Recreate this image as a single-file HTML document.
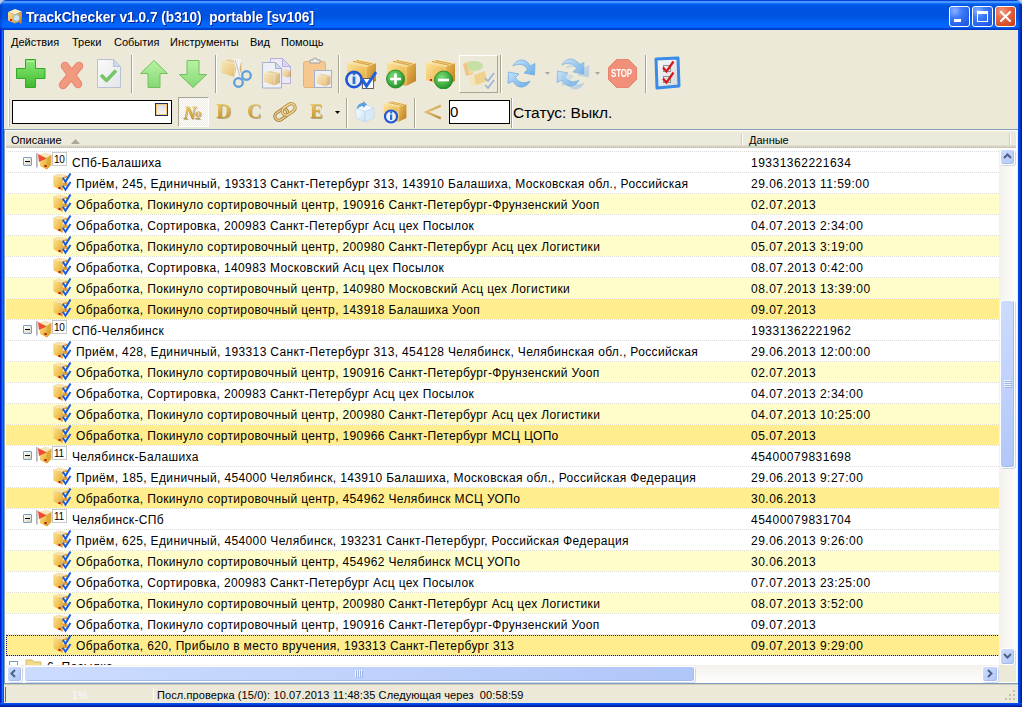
<!DOCTYPE html><html><head><meta charset="utf-8"><style>html,body{margin:0;padding:0;width:1022px;height:707px;overflow:hidden;background:#ECE9D8;position:relative}*{box-sizing:border-box}</style></head><body>
<div style="position:absolute;left:0px;top:0px;width:1022px;height:707px;background:#C8D0E4"></div>
<div style="position:absolute;left:0px;top:6px;width:1022px;height:701px;background:#0842DC"></div>
<div style="position:absolute;left:0px;top:0px;width:1022px;height:30px;border-radius:6px 6px 0 0;background:linear-gradient(180deg,#0A40D4 0px,#0A40D4 1px,#4498FF 1px,#4498FF 3px,#1A78FF 3px,#0862F2 4px,#0058E8 5px,#0054E2 9px,#0053E0 16px,#005CEE 20px,#0066FB 23px,#0068FF 27px,#0052E4 28px,#003CC6 29px,#003CC6 30px)"></div>
<div style="position:absolute;left:1017px;top:4px;width:5px;height:26px;background:linear-gradient(90deg,rgba(0,30,160,0) 0,rgba(0,40,170,0.35) 2px,rgba(0,20,140,0.8) 5px)"></div>
<div style="position:absolute;left:0px;top:4px;width:3px;height:26px;background:linear-gradient(90deg,rgba(0,40,180,0.5) 0,rgba(0,40,180,0) 3px)"></div>
<div style="position:absolute;left:0px;top:0px;width:3px;height:1px;background:#BFCADF"></div>
<div style="position:absolute;left:0px;top:1px;width:1px;height:2px;background:#BFCADF"></div>
<div style="position:absolute;left:1019px;top:0px;width:3px;height:1px;background:#BFCADF"></div>
<div style="position:absolute;left:1021px;top:1px;width:1px;height:2px;background:#BFCADF"></div>
<div style="position:absolute;left:0px;top:30px;width:4px;height:677px;background:linear-gradient(90deg,#0019CF 0,#0019CF 1px,#0043E4 1px,#0043E4 2px,#166EFF 2px,#166EFF 3px,#0552E4 3px,#0552E4 4px)"></div>
<div style="position:absolute;left:1018px;top:30px;width:4px;height:677px;background:linear-gradient(90deg,#0550EC 0,#0550EC 1px,#0040DC 1px,#0040DC 2px,#0030C0 2px,#0030C0 3px,#001A98 3px,#001A98 4px)"></div>
<div style="position:absolute;left:0px;top:703px;width:1022px;height:4px;background:linear-gradient(180deg,#0550EC 0,#0550EC 1px,#0040DC 1px,#0040DC 2px,#0030C0 2px,#0030C0 3px,#001A98 3px,#001A98 4px)"></div>
<div style="position:absolute;left:4px;top:30px;width:1014px;height:673px;background:#ECE9D8"></div>
<div style="position:absolute;left:26px;top:10px;line-height:14.4px;font-size:14.4px;font-family:'Liberation Sans',sans-serif;color:#fff;font-weight:bold;white-space:pre;text-shadow:1px 1px 0 #0A1E8C;transform:scaleX(0.95);transform-origin:0 0">TrackChecker v1.0.7 (b310)  portable [sv106]</div>
<svg style="position:absolute;left:7px;top:8px" width="16" height="16" viewBox="0 0 16 16"><polygon points="1,4 8,1 15,3.5 8,6.5" fill="#FFF0C0"/><polygon points="1,4 8,6.5 8,15.5 1,12.5" fill="url(#gL)"/><polygon points="8,6.5 15,3.5 15,12.5 8,15.5" fill="url(#gR)"/><rect x="3" y="11" width="2" height="2" fill="#D02020"/><circle cx="9.5" cy="10" r="3.4" fill="#CFE4EE" stroke="#98B8C8" stroke-width="1"/><path d="M12 12.5 L14.5 15" stroke="#F07838" stroke-width="2"/></svg>
<div style="position:absolute;left:949px;top:6px;width:21px;height:21px;border:1px solid #fff;border-radius:3px;background:radial-gradient(circle at 25% 20%,#8DB2FF 0,#3D7BF7 35%,#2763EE 70%,#1A4FD8 100%)"></div>
<div style="position:absolute;left:972px;top:6px;width:21px;height:21px;border:1px solid #fff;border-radius:3px;background:radial-gradient(circle at 25% 20%,#8DB2FF 0,#3D7BF7 35%,#2763EE 70%,#1A4FD8 100%)"></div>
<div style="position:absolute;left:995px;top:6px;width:21px;height:21px;border:1px solid #fff;border-radius:3px;background:radial-gradient(circle at 30% 25%,#F2A08A 0,#E86A48 35%,#D84F28 70%,#C23E1A 100%)"></div>
<div style="position:absolute;left:954px;top:19px;width:7px;height:3px;background:#fff"></div>
<div style="position:absolute;left:977px;top:11px;width:11px;height:11px;border:1px solid #fff;border-top:3px solid #fff"></div>
<svg style="position:absolute;left:1000px;top:11px" width="11" height="11" viewBox="0 0 11 11"><path d="M1 1 L10 10 M10 1 L1 10" stroke="#fff" stroke-width="2" stroke-linecap="square"/></svg>
<div style="position:absolute;left:11px;top:37px;line-height:11px;font-size:11px;font-family:'Liberation Sans',sans-serif;color:#000;font-weight:normal;white-space:pre;">Действия</div>
<div style="position:absolute;left:72px;top:37px;line-height:11px;font-size:11px;font-family:'Liberation Sans',sans-serif;color:#000;font-weight:normal;white-space:pre;">Треки</div>
<div style="position:absolute;left:114px;top:37px;line-height:11px;font-size:11px;font-family:'Liberation Sans',sans-serif;color:#000;font-weight:normal;white-space:pre;">События</div>
<div style="position:absolute;left:170px;top:37px;line-height:11px;font-size:11px;font-family:'Liberation Sans',sans-serif;color:#000;font-weight:normal;white-space:pre;">Инструменты</div>
<div style="position:absolute;left:250px;top:37px;line-height:11px;font-size:11px;font-family:'Liberation Sans',sans-serif;color:#000;font-weight:normal;white-space:pre;">Вид</div>
<div style="position:absolute;left:281px;top:37px;line-height:11px;font-size:11px;font-family:'Liberation Sans',sans-serif;color:#000;font-weight:normal;white-space:pre;">Помощь</div>
<div style="position:absolute;left:8px;top:56px;width:1px;height:36px;background:#fff"></div>
<div style="position:absolute;left:9px;top:56px;width:1px;height:36px;background:#C1BDAC"></div>
<div style="position:absolute;left:8px;top:98px;width:1px;height:29px;background:#fff"></div>
<div style="position:absolute;left:9px;top:98px;width:1px;height:29px;background:#C1BDAC"></div>
<div style="position:absolute;left:131px;top:55px;width:1px;height:38px;background:#A6A392"></div>
<div style="position:absolute;left:132px;top:55px;width:1px;height:38px;background:#fff"></div>
<div style="position:absolute;left:215px;top:55px;width:1px;height:38px;background:#A6A392"></div>
<div style="position:absolute;left:216px;top:55px;width:1px;height:38px;background:#fff"></div>
<div style="position:absolute;left:338px;top:55px;width:1px;height:38px;background:#A6A392"></div>
<div style="position:absolute;left:339px;top:55px;width:1px;height:38px;background:#fff"></div>
<div style="position:absolute;left:500px;top:55px;width:1px;height:38px;background:#A6A392"></div>
<div style="position:absolute;left:501px;top:55px;width:1px;height:38px;background:#fff"></div>
<div style="position:absolute;left:645px;top:55px;width:1px;height:38px;background:#A6A392"></div>
<div style="position:absolute;left:646px;top:55px;width:1px;height:38px;background:#fff"></div>
<div style="position:absolute;left:346px;top:98px;width:1px;height:30px;background:#A6A392"></div>
<div style="position:absolute;left:347px;top:98px;width:1px;height:30px;background:#fff"></div>
<div style="position:absolute;left:414px;top:98px;width:1px;height:30px;background:#A6A392"></div>
<div style="position:absolute;left:415px;top:98px;width:1px;height:30px;background:#fff"></div>
<div style="position:absolute;left:511px;top:98px;width:1px;height:30px;background:#A6A392"></div>
<div style="position:absolute;left:512px;top:98px;width:1px;height:30px;background:#fff"></div>
<svg width="0" height="0" style="position:absolute"><defs>
<linearGradient id="gL" x1="0" y1="0" x2="1" y2="1"><stop offset="0" stop-color="#FBE49C"/><stop offset="0.7" stop-color="#EDBA52"/><stop offset="1" stop-color="#D89C30"/></linearGradient>
<linearGradient id="gR" x1="0" y1="0" x2="1" y2="1"><stop offset="0" stop-color="#F0C058"/><stop offset="1" stop-color="#B87A20"/></linearGradient>
<linearGradient id="gT" x1="0" y1="0" x2="0" y2="1"><stop offset="0" stop-color="#FFF4CF"/><stop offset="1" stop-color="#F5D685"/></linearGradient>
<linearGradient id="grn" x1="0" y1="0" x2="0" y2="1"><stop offset="0" stop-color="#8DEB78"/><stop offset="1" stop-color="#3FB82E"/></linearGradient>
<linearGradient id="lgrn" x1="0" y1="0" x2="0" y2="1"><stop offset="0" stop-color="#B8F2A4"/><stop offset="1" stop-color="#86D874"/></linearGradient>
<radialGradient id="gcirc" cx="0.4" cy="0.35" r="0.7"><stop offset="0" stop-color="#7DE07A"/><stop offset="1" stop-color="#1E8E22"/></radialGradient>
<radialGradient id="bcirc" cx="0.4" cy="0.35" r="0.7"><stop offset="0" stop-color="#6FA8F0"/><stop offset="1" stop-color="#1548B8"/></radialGradient>
<linearGradient id="gold" x1="0" y1="0" x2="0" y2="1"><stop offset="0" stop-color="#F4DC8C"/><stop offset="0.5" stop-color="#D0A040"/><stop offset="1" stop-color="#A8782A"/></linearGradient>
</defs></svg>
<svg style="position:absolute;left:16px;top:59px" width="30" height="30" viewBox="0 0 30 30"><path d="M9.5 0.5h10v9h9.5v10h-9.5v9h-10v-9h-9v-10h9z" fill="url(#grn)" stroke="#33A824" stroke-width="1"/><path d="M11 2.5h7" stroke="#D8FFC8" stroke-width="1" opacity="0.7"/></svg>
<svg style="position:absolute;left:54px;top:58px" width="32" height="32" viewBox="0 0 32 32"><g stroke="#E8836A" stroke-width="8.5" stroke-linecap="round" stroke-linejoin="round"><path d="M11 8 L24 26"/><path d="M25 8 L9 27"/></g><g stroke="#F29A80" stroke-width="6.5" stroke-linecap="round"><path d="M11 8 L24 26"/><path d="M25 8 L9 27"/></g></svg>
<svg style="position:absolute;left:96px;top:58px" width="26" height="31" viewBox="0 0 26 31"><defs><linearGradient id="docg" x1="0" y1="0" x2="1" y2="1"><stop offset="0" stop-color="#FAFAF8"/><stop offset="1" stop-color="#E4E6E8"/></linearGradient></defs><path d="M1.5 1.5h16l7 7v21h-23z" fill="url(#docg)" stroke="#B9C2D2" stroke-width="1"/><path d="M17.5 1.5v7h7z" fill="#C8DCF0" stroke="#B9C2D2"/><path d="M5 17 L10.5 22.5 L20 12.5" stroke="#78C468" stroke-width="3.5" fill="none" stroke-linejoin="round"/></svg>
<svg style="position:absolute;left:140px;top:60px" width="28" height="28" viewBox="0 0 28 28"><path d="M14 0.5 L27.5 13.5 H20 V27.5 H8 V13.5 H0.5Z" fill="url(#lgrn)" stroke="#70C05C" stroke-width="1"/></svg>
<svg style="position:absolute;left:179px;top:60px" width="28" height="28" viewBox="0 0 28 28"><path d="M14 27.5 L27.5 14.5 H20 V0.5 H8 V14.5 H0.5Z" fill="url(#lgrn)" stroke="#70C05C" stroke-width="1"/></svg>
<svg style="position:absolute;left:221px;top:57px" width="33" height="32" viewBox="0 0 33 32"><g opacity="0.6"><polygon points="0.68,4.40 13.60,7.12 13.60,20.04 0.68,15.96" fill="url(#gL)"/><polygon points="13.60,7.12 20.40,4.40 20.40,16.64 13.60,20.04" fill="url(#gR)"/><polygon points="0.68,4.40 9.52,1.68 20.40,4.40 13.60,7.12" fill="url(#gT)"/><line x1="4.76" y1="3.24" x2="16.32" y2="5.90" stroke="#D9A850" stroke-width="0.88"/><line x1="7.14" y1="2.56" x2="18.36" y2="5.22" stroke="#D9A850" stroke-width="0.88"/><line x1="13.60" y1="7.12" x2="13.60" y2="20.04" stroke="#F8D890" stroke-width="0.54"/></g><path d="M14 2 L19 19 M19 2 L15 20" stroke="#F4F4F4" stroke-width="3.2"/><path d="M14 3 L19 19" stroke="#B0B0B0" stroke-width="0.8"/><circle cx="17.5" cy="25.5" r="4.3" fill="none" stroke="#5C9EDC" stroke-width="2.2"/><circle cx="25.5" cy="18.5" r="4.3" fill="none" stroke="#5C9EDC" stroke-width="2.2"/></svg>
<svg style="position:absolute;left:261px;top:57px" width="31" height="32" viewBox="0 0 31 32"><path d="M9.5 1.5h12l8 8v17h-20z" fill="#ECE8F6" stroke="#B8B0DC"/><path d="M21.5 1.5v8h8z" fill="#DCD4F4" stroke="#B8B0DC"/><path d="M1.5 5.5h13l6 6v19.5h-19z" fill="#EEF0F6" stroke="#A8B0C8"/><path d="M14.5 5.5v6h6z" fill="#C8E0F0" stroke="#A8B0C8"/><g opacity="0.6"><polygon points="3.05,15.75 13.50,17.95 13.50,28.40 3.05,25.10" fill="url(#gL)"/><polygon points="13.50,17.95 19.00,15.75 19.00,25.65 13.50,28.40" fill="url(#gR)"/><polygon points="3.05,15.75 10.20,13.55 19.00,15.75 13.50,17.95" fill="url(#gT)"/><line x1="6.35" y1="14.81" x2="15.70" y2="16.96" stroke="#D9A850" stroke-width="0.72"/><line x1="8.28" y1="14.27" x2="17.35" y2="16.41" stroke="#D9A850" stroke-width="0.72"/><line x1="13.50" y1="17.95" x2="13.50" y2="28.40" stroke="#F8D890" stroke-width="0.44"/><polygon points="21.30,13.50 27.00,14.70 27.00,20.40 21.30,18.60" fill="url(#gL)"/><polygon points="27.00,14.70 30.00,13.50 30.00,18.90 27.00,20.40" fill="url(#gR)"/><polygon points="21.30,13.50 25.20,12.30 30.00,13.50 27.00,14.70" fill="url(#gT)"/><line x1="23.10" y1="12.99" x2="28.20" y2="14.16" stroke="#D9A850" stroke-width="0.39"/><line x1="24.15" y1="12.69" x2="29.10" y2="13.86" stroke="#D9A850" stroke-width="0.39"/><line x1="27.00" y1="14.70" x2="27.00" y2="20.40" stroke="#F8D890" stroke-width="0.24"/></g></svg>
<svg style="position:absolute;left:302px;top:57px" width="31" height="32" viewBox="0 0 31 32"><rect x="1.5" y="4.5" width="22" height="26" rx="2" fill="#F6C890" stroke="#E4B078"/><path d="M8 6 v-3 h3 a2 2 0 0 1 4 0 h3 v3z" fill="#EDEDED" stroke="#A0A0A0"/><rect x="12.5" y="13.5" width="17" height="17" fill="#EEF0F6" stroke="#A8B0C8"/><g opacity="0.6"><polygon points="14.48,18.40 23.60,20.32 23.60,29.44 14.48,26.56" fill="url(#gL)"/><polygon points="23.60,20.32 28.40,18.40 28.40,27.04 23.60,29.44" fill="url(#gR)"/><polygon points="14.48,18.40 20.72,16.48 28.40,18.40 23.60,20.32" fill="url(#gT)"/><line x1="17.36" y1="17.58" x2="25.52" y2="19.46" stroke="#D9A850" stroke-width="0.62"/><line x1="19.04" y1="17.10" x2="26.96" y2="18.98" stroke="#D9A850" stroke-width="0.62"/><line x1="23.60" y1="20.32" x2="23.60" y2="29.44" stroke="#F8D890" stroke-width="0.38"/></g></svg>
<svg style="position:absolute;left:345px;top:57px" width="32" height="32" viewBox="0 0 32 32"><polygon points="2.00,6.00 21.00,10.00 21.00,29.00 2.00,23.00" fill="url(#gL)"/><polygon points="21.00,10.00 31.00,6.00 31.00,24.00 21.00,29.00" fill="url(#gR)"/><polygon points="2.00,6.00 15.00,2.00 31.00,6.00 21.00,10.00" fill="url(#gT)"/><line x1="8.00" y1="4.30" x2="25.00" y2="8.20" stroke="#D9A850" stroke-width="1.30"/><line x1="11.50" y1="3.30" x2="28.00" y2="7.20" stroke="#D9A850" stroke-width="1.30"/><line x1="21.00" y1="10.00" x2="21.00" y2="29.00" stroke="#F8D890" stroke-width="0.80"/><circle cx="9" cy="22.5" r="7.6" fill="#E8ECF4" stroke="#1F56D4" stroke-width="2.6"/><rect x="7.6" y="19.5" width="2.8" height="7.5" fill="#2A74C8"/><circle cx="9" cy="16.8" r="1.5" fill="#2A74C8"/><rect x="17.5" y="21.5" width="11" height="10" fill="#fff" stroke="#606060"/><path d="M17 22 L21.5 29 L31 15" stroke="#2060E0" stroke-width="3" fill="none"/></svg>
<svg style="position:absolute;left:385px;top:57px" width="31" height="32" viewBox="0 0 31 32"><polygon points="2.00,6.00 21.00,10.00 21.00,29.00 2.00,23.00" fill="url(#gL)"/><polygon points="21.00,10.00 31.00,6.00 31.00,24.00 21.00,29.00" fill="url(#gR)"/><polygon points="2.00,6.00 15.00,2.00 31.00,6.00 21.00,10.00" fill="url(#gT)"/><line x1="8.00" y1="4.30" x2="25.00" y2="8.20" stroke="#D9A850" stroke-width="1.30"/><line x1="11.50" y1="3.30" x2="28.00" y2="7.20" stroke="#D9A850" stroke-width="1.30"/><line x1="21.00" y1="10.00" x2="21.00" y2="29.00" stroke="#F8D890" stroke-width="0.80"/><circle cx="10.5" cy="22" r="9" fill="url(#gcirc)" stroke="#188018" stroke-width="0.8"/><path d="M10.5 16.5v11M5 22h11" stroke="#fff" stroke-width="2.6"/></svg>
<svg style="position:absolute;left:424px;top:57px" width="31" height="32" viewBox="0 0 31 32"><polygon points="2.00,6.00 21.00,10.00 21.00,29.00 2.00,23.00" fill="url(#gL)"/><polygon points="21.00,10.00 31.00,6.00 31.00,24.00 21.00,29.00" fill="url(#gR)"/><polygon points="2.00,6.00 15.00,2.00 31.00,6.00 21.00,10.00" fill="url(#gT)"/><line x1="8.00" y1="4.30" x2="25.00" y2="8.20" stroke="#D9A850" stroke-width="1.30"/><line x1="11.50" y1="3.30" x2="28.00" y2="7.20" stroke="#D9A850" stroke-width="1.30"/><line x1="21.00" y1="10.00" x2="21.00" y2="29.00" stroke="#F8D890" stroke-width="0.80"/><rect x="6" y="22" width="2" height="2" fill="#C02020"/><circle cx="19.5" cy="23" r="9" fill="url(#gcirc)" stroke="#188018" stroke-width="0.8"/><path d="M14 23h11" stroke="#fff" stroke-width="2.6"/></svg>
<div style="position:absolute;left:459px;top:55px;width:39px;height:38px;border:1px solid;border-color:#fff #A8A490 #A8A490 #fff"></div>
<svg style="position:absolute;left:459px;top:55px" width="39" height="38" viewBox="0 0 39 38"><g opacity="0.55"><path d="M4 9 L11 6 L14 19 L7 21Z" fill="#F0A848"/><path d="M8 8 L13 6 L15 17 L10 19Z" fill="#F8D088" /><ellipse cx="16" cy="11" rx="8" ry="5" fill="#A8D878"/><path d="M10 22 L20 19 L22 29 L12 31Z" fill="#F8E0A8"/><path d="M15 20 L26 16 L28 26 L17 30Z" fill="#F0C050"/><path d="M26 23 l3 3 l6 -8 M26 30 l3 3 l6 -8" stroke="#5A84D8" stroke-width="1.6" fill="none"/></g></svg>
<svg style="position:absolute;left:504px;top:55px" width="36" height="36" viewBox="0 0 36 36"><defs><linearGradient id="rfg" x1="0" y1="0" x2="1" y2="1"><stop offset="0" stop-color="#C4E2FA"/><stop offset="1" stop-color="#6AACE8"/></linearGradient></defs><g fill="url(#rfg)" stroke="#6AA6E0" stroke-width="0.7"><path d="M9 11 C12 4 22 2 26 11 L31 8.5 L30.5 20 L20 18 L23.5 14.5 C21 9 14 8 9 11Z"/><path d="M26 26 C23 33 13 35 9 26 L4 28.5 L4.5 17 L15 19 L11.5 22.5 C14 28 21 29 26 26Z"/></g></svg>
<svg style="position:absolute;left:552px;top:54px" width="40" height="38" viewBox="0 0 40 38"><g opacity="0.45" fill="url(#rfg)" stroke="#80B0E0" stroke-width="0.7" transform="translate(6,3)"><path d="M9 11 C12 4 22 2 26 11 L31 8.5 L30.5 20 L20 18 L23.5 14.5 C21 9 14 8 9 11Z"/><path d="M26 26 C23 33 13 35 9 26 L4 28.5 L4.5 17 L15 19 L11.5 22.5 C14 28 21 29 26 26Z"/></g><g opacity="0.85" fill="url(#rfg)" stroke="#6AA6E0" stroke-width="0.7" transform="translate(1,0)"><path d="M9 11 C12 4 22 2 26 11 L31 8.5 L30.5 20 L20 18 L23.5 14.5 C21 9 14 8 9 11Z"/><path d="M26 26 C23 33 13 35 9 26 L4 28.5 L4.5 17 L15 19 L11.5 22.5 C14 28 21 29 26 26Z"/></g></svg>
<svg style="position:absolute;left:545px;top:72px" width="6" height="4" viewBox="0 0 6 4"><path d="M0 0h5l-2.5 3z" fill="#A8A8A0"/></svg>
<svg style="position:absolute;left:595px;top:72px" width="6" height="4" viewBox="0 0 6 4"><path d="M0 0h5l-2.5 3z" fill="#A8A8A0"/></svg>
<svg style="position:absolute;left:608px;top:59px" width="29" height="29" viewBox="0 0 29 29"><path d="M8.5 0.5h12l8 8v12l-8 8h-12l-8-8v-12z" fill="#F0907A" stroke="#E8846C"/></svg>
<div style="position:absolute;left:611px;top:68px;line-height:11.5px;font-size:11.5px;font-family:'Liberation Sans',sans-serif;color:#fff;font-weight:bold;white-space:pre;letter-spacing:-0.2px;transform:scaleX(0.69);transform-origin:0 0">STOP</div>
<svg style="position:absolute;left:654px;top:56px" width="27" height="34" viewBox="0 0 27 34"><defs><linearGradient id="clg" x1="0" y1="0" x2="1" y2="1"><stop offset="0" stop-color="#FAFAFA"/><stop offset="1" stop-color="#D4D8DC"/></linearGradient></defs><path d="M2 3 L24 2 L25 30 L3 32Z" fill="url(#clg)" stroke="#3A8AE8" stroke-width="3" stroke-linejoin="round"/><rect x="9.5" y="9.5" width="7" height="6" fill="none" stroke="#909090"/><rect x="9.5" y="20.5" width="7" height="6" fill="none" stroke="#909090"/><path d="M9 11.5 l3.5 4 l7 -10 M9 22.5 l3.5 4 l7 -10" stroke="#D81818" stroke-width="2.2" fill="none"/></svg>
<div style="position:absolute;left:12px;top:100px;width:160px;height:24px;border:1px solid #000;background:#fff"></div>
<div style="position:absolute;left:155px;top:103px;width:13px;height:13px;border:1px solid #1C2C6C;box-shadow:inset 0 0 0 1px #F8C878;background:linear-gradient(180deg,#D8DCE0,#F8F8F8)"></div>
<div style="position:absolute;left:178px;top:97px;width:31px;height:30px;border:1px solid;border-color:#A8A490 #fff #fff #A8A490;background-color:#F8F7F2;background-image:repeating-conic-gradient(#FFFFFF 0 25%,#EDEAE0 0 50%);background-size:2px 2px"></div>
<div style="position:absolute;left:183px;top:103px;line-height:19px;font-size:19px;font-family:'Liberation Serif',serif;color:#D4A840;font-weight:bold;white-space:pre;background:linear-gradient(180deg,#F0D478 0%,#D8AC40 55%,#B88A28 100%);-webkit-background-clip:text;background-clip:text;-webkit-text-fill-color:transparent;filter:drop-shadow(1px 1px 0 rgba(120,90,40,0.45));transform:scaleX(1.08);transform-origin:0 0;font-style:italic">№</div>
<div style="position:absolute;left:216px;top:101px;line-height:20px;font-size:20px;font-family:'Liberation Serif',serif;color:#D4A840;font-weight:bold;white-space:pre;background:linear-gradient(180deg,#F0D478 0%,#D8AC40 55%,#B88A28 100%);-webkit-background-clip:text;background-clip:text;-webkit-text-fill-color:transparent;filter:drop-shadow(1px 1px 0 rgba(120,90,40,0.45));transform:scaleX(1.05);transform-origin:0 0;font-style:normal">D</div>
<div style="position:absolute;left:247px;top:101px;line-height:20px;font-size:20px;font-family:'Liberation Serif',serif;color:#D4A840;font-weight:bold;white-space:pre;background:linear-gradient(180deg,#F0D478 0%,#D8AC40 55%,#B88A28 100%);-webkit-background-clip:text;background-clip:text;-webkit-text-fill-color:transparent;filter:drop-shadow(1px 1px 0 rgba(120,90,40,0.45));transform:scaleX(1.0);transform-origin:0 0;font-style:normal">C</div>
<div style="position:absolute;left:310px;top:101px;line-height:20px;font-size:20px;font-family:'Liberation Serif',serif;color:#D4A840;font-weight:bold;white-space:pre;background:linear-gradient(180deg,#F0D478 0%,#D8AC40 55%,#B88A28 100%);-webkit-background-clip:text;background-clip:text;-webkit-text-fill-color:transparent;filter:drop-shadow(1px 1px 0 rgba(120,90,40,0.45));transform:scaleX(0.95);transform-origin:0 0;font-style:normal">E</div>
<svg style="position:absolute;left:272px;top:101px" width="27" height="21" viewBox="0 0 27 21"><g transform="rotate(-35 13 11)"><rect x="1.5" y="7" width="14" height="8" rx="4" fill="none" stroke="#A88040" stroke-width="3.2"/><rect x="1.5" y="7" width="14" height="8" rx="4" fill="none" stroke="#E8CC88" stroke-width="1.4"/><rect x="10.5" y="7" width="14" height="8" rx="4" fill="none" stroke="#B89048" stroke-width="3.2"/><rect x="10.5" y="7" width="14" height="8" rx="4" fill="none" stroke="#F0D898" stroke-width="1.4"/></g></svg>
<svg style="position:absolute;left:335px;top:111px" width="6" height="4" viewBox="0 0 6 4"><path d="M0 0h5l-2.5 3z" fill="#000"/></svg>
<svg style="position:absolute;left:354px;top:100px" width="22" height="23" viewBox="0 0 22 23"><defs><linearGradient id="bbx" x1="0" y1="0" x2="1" y2="1"><stop offset="0" stop-color="#FFFFFF"/><stop offset="1" stop-color="#C8E0F6"/></linearGradient></defs><polygon points="2,8 11,4.5 20,8 11,11.5" fill="#F4FAFF" stroke="#B8D4EE" stroke-width="0.6"/><polygon points="2,8 11,11.5 11,22 2,18" fill="url(#bbx)" stroke="#B8D4EE" stroke-width="0.6"/><polygon points="11,11.5 20,8 20,18 11,22" fill="#D8EAFA" stroke="#B8D4EE" stroke-width="0.6"/><path d="M3 9 C3 5 6 3 9 3 L9 1 L13 4.5 L9 8 L9 6 C7 6 5 7 3 9Z" fill="#5AA0E0"/></svg>
<svg style="position:absolute;left:383px;top:100px" width="25" height="24" viewBox="0 0 25 24"><polygon points="0.78,3.90 15.60,7.02 15.60,21.84 0.78,17.16" fill="url(#gL)"/><polygon points="15.60,7.02 23.40,3.90 23.40,17.94 15.60,21.84" fill="url(#gR)"/><polygon points="0.78,3.90 10.92,0.78 23.40,3.90 15.60,7.02" fill="url(#gT)"/><line x1="5.46" y1="2.57" x2="18.72" y2="5.62" stroke="#D9A850" stroke-width="1.01"/><line x1="8.19" y1="1.79" x2="21.06" y2="4.84" stroke="#D9A850" stroke-width="1.01"/><line x1="15.60" y1="7.02" x2="15.60" y2="21.84" stroke="#F8D890" stroke-width="0.62"/><circle cx="8" cy="16.5" r="6" fill="#EEF2F8" stroke="#1F56D4" stroke-width="2.2"/><rect x="7" y="14.5" width="2.2" height="5.5" fill="#2A74C8"/><circle cx="8.1" cy="12.4" r="1.2" fill="#2A74C8"/></svg>
<svg style="position:absolute;left:423px;top:104px" width="19" height="16" viewBox="0 0 19 16"><defs><linearGradient id="ltg" x1="0" y1="0" x2="1" y2="1"><stop offset="0" stop-color="#F0D890"/><stop offset="1" stop-color="#B88A30"/></linearGradient></defs><path d="M0.5 8 L17.5 0.5 L18 3 L6 8 L18 13 L17.5 15.5Z" fill="url(#ltg)"/></svg>
<div style="position:absolute;left:449px;top:100px;width:61px;height:24px;border:1px solid #000;background:#fff"></div>
<div style="position:absolute;left:450px;top:104px;line-height:15px;font-size:15px;font-family:'Liberation Sans',sans-serif;color:#000;font-weight:normal;white-space:pre;">0</div>
<div style="position:absolute;left:513px;top:105px;line-height:15.5px;font-size:15.5px;font-family:'Liberation Sans',sans-serif;color:#000;font-weight:normal;white-space:pre;">Статус: Выкл.</div>
<div style="position:absolute;left:4px;top:129px;width:1014px;height:1px;background:#7F9DB9"></div>
<div style="position:absolute;left:4px;top:129px;width:1px;height:555px;background:#7F9DB9"></div>
<div style="position:absolute;left:5px;top:130px;width:1012px;height:553px;background:#fff"></div>
<div style="position:absolute;left:4px;top:683px;width:1014px;height:1px;background:#7F9DB9"></div>
<div style="position:absolute;left:4px;top:684px;width:1014px;height:1px;background:#CFCBBB"></div>
<div style="position:absolute;left:6px;top:131px;width:1010px;height:17px;background:linear-gradient(180deg,#F1EEE2 0,#EBEADB 2px,#EBEADB 14px,#E2DECD 14px,#E2DECD 15px,#D6D2C2 15px,#D6D2C2 16px,#CBC7B8 16px,#CBC7B8 17px)"></div>
<div style="position:absolute;left:11px;top:135px;line-height:11px;font-size:11px;font-family:'Liberation Sans',sans-serif;color:#000;font-weight:normal;white-space:pre;">Описание</div>
<svg style="position:absolute;left:71px;top:138px" width="10" height="6" viewBox="0 0 10 6"><path d="M0 6h9l-4.5-5z" fill="#ACA899"/></svg>
<div style="position:absolute;left:741px;top:134px;width:1px;height:11px;background:#D0CDB9"></div>
<div style="position:absolute;left:742px;top:134px;width:1px;height:11px;background:#fff"></div>
<div style="position:absolute;left:1009px;top:134px;width:1px;height:11px;background:#D0CDB9"></div>
<div style="position:absolute;left:1010px;top:134px;width:1px;height:11px;background:#fff"></div>
<div style="position:absolute;left:749px;top:135px;line-height:11px;font-size:11px;font-family:'Liberation Sans',sans-serif;color:#000;font-weight:normal;white-space:pre;">Данные</div>
<div style="position:absolute;left:6px;top:149px;width:993px;height:516px;overflow:hidden">
<div style="position:absolute;left:17px;top:8px;width:9px;height:9px;border:1px solid #7B9EBD;border-radius:1px;background:linear-gradient(135deg,#fff,#D6D2C4)"></div>
<div style="position:absolute;left:19px;top:12px;width:5px;height:1px;background:#000"></div>
<svg style="position:absolute;left:28px;top:2px" width="20" height="20" viewBox="0 0 20 20"><rect x="2" y="2" width="1.7" height="14.5" fill="#B4B4BC"/><polygon points="5.5,4 13,6.5 13,18.5 6,15" fill="url(#rbl)"/><polygon points="13,6.5 17.5,3.5 17.5,14 13,18.5" fill="#E0A838"/><polygon points="5.5,4 11,1.5 17.5,3.5 13,6.5" fill="#F8E6BC"/><polygon points="4,3 12.5,7.5 5,11" fill="#F04A32"/><rect x="10.5" y="14" width="2" height="2" fill="#B01010"/></svg>
<div style="position:absolute;left:46px;top:3px;width:15px;height:14px;border:1px solid #C8C8C8;background:#fff"></div>
<div style="position:absolute;left:48px;top:6px;line-height:10px;font-size:10px;font-family:'Liberation Sans',sans-serif;color:#000;font-weight:normal;white-space:pre;letter-spacing:-0.2px;">10</div>
<div style="position:absolute;left:66px;top:8px;line-height:12px;font-size:12px;font-family:'Liberation Sans',sans-serif;color:#000;font-weight:normal;white-space:pre;letter-spacing:0.36px;">СПб-Балашиха</div>
<div style="position:absolute;left:745px;top:8px;line-height:12px;font-size:12px;font-family:'Liberation Sans',sans-serif;color:#000;font-weight:normal;white-space:pre;letter-spacing:0.5px;">19331362221634</div>
<svg style="position:absolute;left:44px;top:23px" width="22" height="21" viewBox="0 0 22 21"><defs><linearGradient id="rbl" x1="0" y1="0" x2="1" y2="1"><stop offset="0" stop-color="#FCE49A"/><stop offset="0.6" stop-color="#F0C050"/><stop offset="1" stop-color="#D89A28"/></linearGradient></defs><polygon points="3,3.5 12.5,5.5 12.5,18.7 3.5,14.5" fill="url(#rbl)"/><polygon points="3,3.5 9,1.5 17.5,3.5 12.5,5.5" fill="#F6E2B0"/><polygon points="12.5,5.5 17.5,3.5 17.5,16 12.5,18.7" fill="#DCA040"/><rect x="13" y="6" width="5" height="4.5" fill="#fff"/><rect x="13" y="14" width="5" height="4.5" fill="#fff"/><rect x="8.5" y="15" width="2" height="2" fill="#C01010"/><polyline points="12.8,5.8 15.5,9.8 20.5,1.5" stroke="#1A5CDC" stroke-width="2" fill="none"/><polyline points="12.8,13.8 15.5,17.8 20.5,10" stroke="#1A5CDC" stroke-width="2" fill="none"/></svg>
<div style="position:absolute;left:70px;top:29px;line-height:12px;font-size:12px;font-family:'Liberation Sans',sans-serif;color:#000;font-weight:normal;white-space:pre;letter-spacing:0.36px;">Приём, 245, Единичный, 193313 Санкт-Петербург 313, 143910 Балашиха, Московская обл., Российская</div>
<div style="position:absolute;left:745px;top:29px;line-height:12px;font-size:12px;font-family:'Liberation Sans',sans-serif;color:#000;font-weight:normal;white-space:pre;letter-spacing:0.5px;">29.06.2013 11:59:00</div>
<div style="position:absolute;left:0px;top:45px;width:993px;height:20px;background:#FFFDCA"></div>
<svg style="position:absolute;left:44px;top:44px" width="22" height="21" viewBox="0 0 22 21"><defs><linearGradient id="rbl" x1="0" y1="0" x2="1" y2="1"><stop offset="0" stop-color="#FCE49A"/><stop offset="0.6" stop-color="#F0C050"/><stop offset="1" stop-color="#D89A28"/></linearGradient></defs><polygon points="3,3.5 12.5,5.5 12.5,18.7 3.5,14.5" fill="url(#rbl)"/><polygon points="3,3.5 9,1.5 17.5,3.5 12.5,5.5" fill="#F6E2B0"/><polygon points="12.5,5.5 17.5,3.5 17.5,16 12.5,18.7" fill="#DCA040"/><rect x="13" y="6" width="5" height="4.5" fill="#fff"/><rect x="13" y="14" width="5" height="4.5" fill="#fff"/><rect x="8.5" y="15" width="2" height="2" fill="#C01010"/><polyline points="12.8,5.8 15.5,9.8 20.5,1.5" stroke="#1A5CDC" stroke-width="2" fill="none"/><polyline points="12.8,13.8 15.5,17.8 20.5,10" stroke="#1A5CDC" stroke-width="2" fill="none"/></svg>
<div style="position:absolute;left:70px;top:50px;line-height:12px;font-size:12px;font-family:'Liberation Sans',sans-serif;color:#000;font-weight:normal;white-space:pre;letter-spacing:0.36px;">Обработка, Покинуло сортировочный центр, 190916 Санкт-Петербург-Фрунзенский Уооп</div>
<div style="position:absolute;left:745px;top:50px;line-height:12px;font-size:12px;font-family:'Liberation Sans',sans-serif;color:#000;font-weight:normal;white-space:pre;letter-spacing:0.5px;">02.07.2013</div>
<svg style="position:absolute;left:44px;top:65px" width="22" height="21" viewBox="0 0 22 21"><defs><linearGradient id="rbl" x1="0" y1="0" x2="1" y2="1"><stop offset="0" stop-color="#FCE49A"/><stop offset="0.6" stop-color="#F0C050"/><stop offset="1" stop-color="#D89A28"/></linearGradient></defs><polygon points="3,3.5 12.5,5.5 12.5,18.7 3.5,14.5" fill="url(#rbl)"/><polygon points="3,3.5 9,1.5 17.5,3.5 12.5,5.5" fill="#F6E2B0"/><polygon points="12.5,5.5 17.5,3.5 17.5,16 12.5,18.7" fill="#DCA040"/><rect x="13" y="6" width="5" height="4.5" fill="#fff"/><rect x="13" y="14" width="5" height="4.5" fill="#fff"/><rect x="8.5" y="15" width="2" height="2" fill="#C01010"/><polyline points="12.8,5.8 15.5,9.8 20.5,1.5" stroke="#1A5CDC" stroke-width="2" fill="none"/><polyline points="12.8,13.8 15.5,17.8 20.5,10" stroke="#1A5CDC" stroke-width="2" fill="none"/></svg>
<div style="position:absolute;left:70px;top:71px;line-height:12px;font-size:12px;font-family:'Liberation Sans',sans-serif;color:#000;font-weight:normal;white-space:pre;letter-spacing:0.36px;">Обработка, Сортировка, 200983 Санкт-Петербург Асц цех Посылок</div>
<div style="position:absolute;left:745px;top:71px;line-height:12px;font-size:12px;font-family:'Liberation Sans',sans-serif;color:#000;font-weight:normal;white-space:pre;letter-spacing:0.5px;">04.07.2013 2:34:00</div>
<div style="position:absolute;left:0px;top:87px;width:993px;height:20px;background:#FFFDCA"></div>
<svg style="position:absolute;left:44px;top:86px" width="22" height="21" viewBox="0 0 22 21"><defs><linearGradient id="rbl" x1="0" y1="0" x2="1" y2="1"><stop offset="0" stop-color="#FCE49A"/><stop offset="0.6" stop-color="#F0C050"/><stop offset="1" stop-color="#D89A28"/></linearGradient></defs><polygon points="3,3.5 12.5,5.5 12.5,18.7 3.5,14.5" fill="url(#rbl)"/><polygon points="3,3.5 9,1.5 17.5,3.5 12.5,5.5" fill="#F6E2B0"/><polygon points="12.5,5.5 17.5,3.5 17.5,16 12.5,18.7" fill="#DCA040"/><rect x="13" y="6" width="5" height="4.5" fill="#fff"/><rect x="13" y="14" width="5" height="4.5" fill="#fff"/><rect x="8.5" y="15" width="2" height="2" fill="#C01010"/><polyline points="12.8,5.8 15.5,9.8 20.5,1.5" stroke="#1A5CDC" stroke-width="2" fill="none"/><polyline points="12.8,13.8 15.5,17.8 20.5,10" stroke="#1A5CDC" stroke-width="2" fill="none"/></svg>
<div style="position:absolute;left:70px;top:92px;line-height:12px;font-size:12px;font-family:'Liberation Sans',sans-serif;color:#000;font-weight:normal;white-space:pre;letter-spacing:0.36px;">Обработка, Покинуло сортировочный центр, 200980 Санкт-Петербург Асц цех Логистики</div>
<div style="position:absolute;left:745px;top:92px;line-height:12px;font-size:12px;font-family:'Liberation Sans',sans-serif;color:#000;font-weight:normal;white-space:pre;letter-spacing:0.5px;">05.07.2013 3:19:00</div>
<svg style="position:absolute;left:44px;top:107px" width="22" height="21" viewBox="0 0 22 21"><defs><linearGradient id="rbl" x1="0" y1="0" x2="1" y2="1"><stop offset="0" stop-color="#FCE49A"/><stop offset="0.6" stop-color="#F0C050"/><stop offset="1" stop-color="#D89A28"/></linearGradient></defs><polygon points="3,3.5 12.5,5.5 12.5,18.7 3.5,14.5" fill="url(#rbl)"/><polygon points="3,3.5 9,1.5 17.5,3.5 12.5,5.5" fill="#F6E2B0"/><polygon points="12.5,5.5 17.5,3.5 17.5,16 12.5,18.7" fill="#DCA040"/><rect x="13" y="6" width="5" height="4.5" fill="#fff"/><rect x="13" y="14" width="5" height="4.5" fill="#fff"/><rect x="8.5" y="15" width="2" height="2" fill="#C01010"/><polyline points="12.8,5.8 15.5,9.8 20.5,1.5" stroke="#1A5CDC" stroke-width="2" fill="none"/><polyline points="12.8,13.8 15.5,17.8 20.5,10" stroke="#1A5CDC" stroke-width="2" fill="none"/></svg>
<div style="position:absolute;left:70px;top:113px;line-height:12px;font-size:12px;font-family:'Liberation Sans',sans-serif;color:#000;font-weight:normal;white-space:pre;letter-spacing:0.36px;">Обработка, Сортировка, 140983 Московский Асц цех Посылок</div>
<div style="position:absolute;left:745px;top:113px;line-height:12px;font-size:12px;font-family:'Liberation Sans',sans-serif;color:#000;font-weight:normal;white-space:pre;letter-spacing:0.5px;">08.07.2013 0:42:00</div>
<div style="position:absolute;left:0px;top:129px;width:993px;height:20px;background:#FFFDCA"></div>
<svg style="position:absolute;left:44px;top:128px" width="22" height="21" viewBox="0 0 22 21"><defs><linearGradient id="rbl" x1="0" y1="0" x2="1" y2="1"><stop offset="0" stop-color="#FCE49A"/><stop offset="0.6" stop-color="#F0C050"/><stop offset="1" stop-color="#D89A28"/></linearGradient></defs><polygon points="3,3.5 12.5,5.5 12.5,18.7 3.5,14.5" fill="url(#rbl)"/><polygon points="3,3.5 9,1.5 17.5,3.5 12.5,5.5" fill="#F6E2B0"/><polygon points="12.5,5.5 17.5,3.5 17.5,16 12.5,18.7" fill="#DCA040"/><rect x="13" y="6" width="5" height="4.5" fill="#fff"/><rect x="13" y="14" width="5" height="4.5" fill="#fff"/><rect x="8.5" y="15" width="2" height="2" fill="#C01010"/><polyline points="12.8,5.8 15.5,9.8 20.5,1.5" stroke="#1A5CDC" stroke-width="2" fill="none"/><polyline points="12.8,13.8 15.5,17.8 20.5,10" stroke="#1A5CDC" stroke-width="2" fill="none"/></svg>
<div style="position:absolute;left:70px;top:134px;line-height:12px;font-size:12px;font-family:'Liberation Sans',sans-serif;color:#000;font-weight:normal;white-space:pre;letter-spacing:0.36px;">Обработка, Покинуло сортировочный центр, 140980 Московский Асц цех Логистики</div>
<div style="position:absolute;left:745px;top:134px;line-height:12px;font-size:12px;font-family:'Liberation Sans',sans-serif;color:#000;font-weight:normal;white-space:pre;letter-spacing:0.5px;">08.07.2013 13:39:00</div>
<div style="position:absolute;left:0px;top:150px;width:993px;height:20px;background:#FFED8E"></div>
<svg style="position:absolute;left:44px;top:149px" width="22" height="21" viewBox="0 0 22 21"><defs><linearGradient id="rbl" x1="0" y1="0" x2="1" y2="1"><stop offset="0" stop-color="#FCE49A"/><stop offset="0.6" stop-color="#F0C050"/><stop offset="1" stop-color="#D89A28"/></linearGradient></defs><polygon points="3,3.5 12.5,5.5 12.5,18.7 3.5,14.5" fill="url(#rbl)"/><polygon points="3,3.5 9,1.5 17.5,3.5 12.5,5.5" fill="#F6E2B0"/><polygon points="12.5,5.5 17.5,3.5 17.5,16 12.5,18.7" fill="#DCA040"/><rect x="13" y="6" width="5" height="4.5" fill="#fff"/><rect x="13" y="14" width="5" height="4.5" fill="#fff"/><rect x="8.5" y="15" width="2" height="2" fill="#C01010"/><polyline points="12.8,5.8 15.5,9.8 20.5,1.5" stroke="#1A5CDC" stroke-width="2" fill="none"/><polyline points="12.8,13.8 15.5,17.8 20.5,10" stroke="#1A5CDC" stroke-width="2" fill="none"/></svg>
<div style="position:absolute;left:70px;top:155px;line-height:12px;font-size:12px;font-family:'Liberation Sans',sans-serif;color:#000;font-weight:normal;white-space:pre;letter-spacing:0.36px;">Обработка, Покинуло сортировочный центр, 143918 Балашиха Уооп</div>
<div style="position:absolute;left:745px;top:155px;line-height:12px;font-size:12px;font-family:'Liberation Sans',sans-serif;color:#000;font-weight:normal;white-space:pre;letter-spacing:0.5px;">09.07.2013</div>
<div style="position:absolute;left:17px;top:176px;width:9px;height:9px;border:1px solid #7B9EBD;border-radius:1px;background:linear-gradient(135deg,#fff,#D6D2C4)"></div>
<div style="position:absolute;left:19px;top:180px;width:5px;height:1px;background:#000"></div>
<svg style="position:absolute;left:28px;top:170px" width="20" height="20" viewBox="0 0 20 20"><rect x="2" y="2" width="1.7" height="14.5" fill="#B4B4BC"/><polygon points="5.5,4 13,6.5 13,18.5 6,15" fill="url(#rbl)"/><polygon points="13,6.5 17.5,3.5 17.5,14 13,18.5" fill="#E0A838"/><polygon points="5.5,4 11,1.5 17.5,3.5 13,6.5" fill="#F8E6BC"/><polygon points="4,3 12.5,7.5 5,11" fill="#F04A32"/><rect x="10.5" y="14" width="2" height="2" fill="#B01010"/></svg>
<div style="position:absolute;left:46px;top:171px;width:15px;height:14px;border:1px solid #C8C8C8;background:#fff"></div>
<div style="position:absolute;left:48px;top:174px;line-height:10px;font-size:10px;font-family:'Liberation Sans',sans-serif;color:#000;font-weight:normal;white-space:pre;letter-spacing:-0.2px;">10</div>
<div style="position:absolute;left:66px;top:176px;line-height:12px;font-size:12px;font-family:'Liberation Sans',sans-serif;color:#000;font-weight:normal;white-space:pre;letter-spacing:0.36px;">СПб-Челябинск</div>
<div style="position:absolute;left:745px;top:176px;line-height:12px;font-size:12px;font-family:'Liberation Sans',sans-serif;color:#000;font-weight:normal;white-space:pre;letter-spacing:0.5px;">19331362221962</div>
<svg style="position:absolute;left:44px;top:191px" width="22" height="21" viewBox="0 0 22 21"><defs><linearGradient id="rbl" x1="0" y1="0" x2="1" y2="1"><stop offset="0" stop-color="#FCE49A"/><stop offset="0.6" stop-color="#F0C050"/><stop offset="1" stop-color="#D89A28"/></linearGradient></defs><polygon points="3,3.5 12.5,5.5 12.5,18.7 3.5,14.5" fill="url(#rbl)"/><polygon points="3,3.5 9,1.5 17.5,3.5 12.5,5.5" fill="#F6E2B0"/><polygon points="12.5,5.5 17.5,3.5 17.5,16 12.5,18.7" fill="#DCA040"/><rect x="13" y="6" width="5" height="4.5" fill="#fff"/><rect x="13" y="14" width="5" height="4.5" fill="#fff"/><rect x="8.5" y="15" width="2" height="2" fill="#C01010"/><polyline points="12.8,5.8 15.5,9.8 20.5,1.5" stroke="#1A5CDC" stroke-width="2" fill="none"/><polyline points="12.8,13.8 15.5,17.8 20.5,10" stroke="#1A5CDC" stroke-width="2" fill="none"/></svg>
<div style="position:absolute;left:70px;top:197px;line-height:12px;font-size:12px;font-family:'Liberation Sans',sans-serif;color:#000;font-weight:normal;white-space:pre;letter-spacing:0.36px;">Приём, 428, Единичный, 193313 Санкт-Петербург 313, 454128 Челябинск, Челябинская обл., Российская</div>
<div style="position:absolute;left:745px;top:197px;line-height:12px;font-size:12px;font-family:'Liberation Sans',sans-serif;color:#000;font-weight:normal;white-space:pre;letter-spacing:0.5px;">29.06.2013 12:00:00</div>
<div style="position:absolute;left:0px;top:213px;width:993px;height:20px;background:#FFFDCA"></div>
<svg style="position:absolute;left:44px;top:212px" width="22" height="21" viewBox="0 0 22 21"><defs><linearGradient id="rbl" x1="0" y1="0" x2="1" y2="1"><stop offset="0" stop-color="#FCE49A"/><stop offset="0.6" stop-color="#F0C050"/><stop offset="1" stop-color="#D89A28"/></linearGradient></defs><polygon points="3,3.5 12.5,5.5 12.5,18.7 3.5,14.5" fill="url(#rbl)"/><polygon points="3,3.5 9,1.5 17.5,3.5 12.5,5.5" fill="#F6E2B0"/><polygon points="12.5,5.5 17.5,3.5 17.5,16 12.5,18.7" fill="#DCA040"/><rect x="13" y="6" width="5" height="4.5" fill="#fff"/><rect x="13" y="14" width="5" height="4.5" fill="#fff"/><rect x="8.5" y="15" width="2" height="2" fill="#C01010"/><polyline points="12.8,5.8 15.5,9.8 20.5,1.5" stroke="#1A5CDC" stroke-width="2" fill="none"/><polyline points="12.8,13.8 15.5,17.8 20.5,10" stroke="#1A5CDC" stroke-width="2" fill="none"/></svg>
<div style="position:absolute;left:70px;top:218px;line-height:12px;font-size:12px;font-family:'Liberation Sans',sans-serif;color:#000;font-weight:normal;white-space:pre;letter-spacing:0.36px;">Обработка, Покинуло сортировочный центр, 190916 Санкт-Петербург-Фрунзенский Уооп</div>
<div style="position:absolute;left:745px;top:218px;line-height:12px;font-size:12px;font-family:'Liberation Sans',sans-serif;color:#000;font-weight:normal;white-space:pre;letter-spacing:0.5px;">02.07.2013</div>
<svg style="position:absolute;left:44px;top:233px" width="22" height="21" viewBox="0 0 22 21"><defs><linearGradient id="rbl" x1="0" y1="0" x2="1" y2="1"><stop offset="0" stop-color="#FCE49A"/><stop offset="0.6" stop-color="#F0C050"/><stop offset="1" stop-color="#D89A28"/></linearGradient></defs><polygon points="3,3.5 12.5,5.5 12.5,18.7 3.5,14.5" fill="url(#rbl)"/><polygon points="3,3.5 9,1.5 17.5,3.5 12.5,5.5" fill="#F6E2B0"/><polygon points="12.5,5.5 17.5,3.5 17.5,16 12.5,18.7" fill="#DCA040"/><rect x="13" y="6" width="5" height="4.5" fill="#fff"/><rect x="13" y="14" width="5" height="4.5" fill="#fff"/><rect x="8.5" y="15" width="2" height="2" fill="#C01010"/><polyline points="12.8,5.8 15.5,9.8 20.5,1.5" stroke="#1A5CDC" stroke-width="2" fill="none"/><polyline points="12.8,13.8 15.5,17.8 20.5,10" stroke="#1A5CDC" stroke-width="2" fill="none"/></svg>
<div style="position:absolute;left:70px;top:239px;line-height:12px;font-size:12px;font-family:'Liberation Sans',sans-serif;color:#000;font-weight:normal;white-space:pre;letter-spacing:0.36px;">Обработка, Сортировка, 200983 Санкт-Петербург Асц цех Посылок</div>
<div style="position:absolute;left:745px;top:239px;line-height:12px;font-size:12px;font-family:'Liberation Sans',sans-serif;color:#000;font-weight:normal;white-space:pre;letter-spacing:0.5px;">04.07.2013 2:34:00</div>
<div style="position:absolute;left:0px;top:255px;width:993px;height:20px;background:#FFFDCA"></div>
<svg style="position:absolute;left:44px;top:254px" width="22" height="21" viewBox="0 0 22 21"><defs><linearGradient id="rbl" x1="0" y1="0" x2="1" y2="1"><stop offset="0" stop-color="#FCE49A"/><stop offset="0.6" stop-color="#F0C050"/><stop offset="1" stop-color="#D89A28"/></linearGradient></defs><polygon points="3,3.5 12.5,5.5 12.5,18.7 3.5,14.5" fill="url(#rbl)"/><polygon points="3,3.5 9,1.5 17.5,3.5 12.5,5.5" fill="#F6E2B0"/><polygon points="12.5,5.5 17.5,3.5 17.5,16 12.5,18.7" fill="#DCA040"/><rect x="13" y="6" width="5" height="4.5" fill="#fff"/><rect x="13" y="14" width="5" height="4.5" fill="#fff"/><rect x="8.5" y="15" width="2" height="2" fill="#C01010"/><polyline points="12.8,5.8 15.5,9.8 20.5,1.5" stroke="#1A5CDC" stroke-width="2" fill="none"/><polyline points="12.8,13.8 15.5,17.8 20.5,10" stroke="#1A5CDC" stroke-width="2" fill="none"/></svg>
<div style="position:absolute;left:70px;top:260px;line-height:12px;font-size:12px;font-family:'Liberation Sans',sans-serif;color:#000;font-weight:normal;white-space:pre;letter-spacing:0.36px;">Обработка, Покинуло сортировочный центр, 200980 Санкт-Петербург Асц цех Логистики</div>
<div style="position:absolute;left:745px;top:260px;line-height:12px;font-size:12px;font-family:'Liberation Sans',sans-serif;color:#000;font-weight:normal;white-space:pre;letter-spacing:0.5px;">04.07.2013 10:25:00</div>
<div style="position:absolute;left:0px;top:276px;width:993px;height:20px;background:#FFED8E"></div>
<svg style="position:absolute;left:44px;top:275px" width="22" height="21" viewBox="0 0 22 21"><defs><linearGradient id="rbl" x1="0" y1="0" x2="1" y2="1"><stop offset="0" stop-color="#FCE49A"/><stop offset="0.6" stop-color="#F0C050"/><stop offset="1" stop-color="#D89A28"/></linearGradient></defs><polygon points="3,3.5 12.5,5.5 12.5,18.7 3.5,14.5" fill="url(#rbl)"/><polygon points="3,3.5 9,1.5 17.5,3.5 12.5,5.5" fill="#F6E2B0"/><polygon points="12.5,5.5 17.5,3.5 17.5,16 12.5,18.7" fill="#DCA040"/><rect x="13" y="6" width="5" height="4.5" fill="#fff"/><rect x="13" y="14" width="5" height="4.5" fill="#fff"/><rect x="8.5" y="15" width="2" height="2" fill="#C01010"/><polyline points="12.8,5.8 15.5,9.8 20.5,1.5" stroke="#1A5CDC" stroke-width="2" fill="none"/><polyline points="12.8,13.8 15.5,17.8 20.5,10" stroke="#1A5CDC" stroke-width="2" fill="none"/></svg>
<div style="position:absolute;left:70px;top:281px;line-height:12px;font-size:12px;font-family:'Liberation Sans',sans-serif;color:#000;font-weight:normal;white-space:pre;letter-spacing:0.36px;">Обработка, Покинуло сортировочный центр, 190966 Санкт-Петербург МСЦ ЦОПо</div>
<div style="position:absolute;left:745px;top:281px;line-height:12px;font-size:12px;font-family:'Liberation Sans',sans-serif;color:#000;font-weight:normal;white-space:pre;letter-spacing:0.5px;">05.07.2013</div>
<div style="position:absolute;left:17px;top:302px;width:9px;height:9px;border:1px solid #7B9EBD;border-radius:1px;background:linear-gradient(135deg,#fff,#D6D2C4)"></div>
<div style="position:absolute;left:19px;top:306px;width:5px;height:1px;background:#000"></div>
<svg style="position:absolute;left:28px;top:296px" width="20" height="20" viewBox="0 0 20 20"><rect x="2" y="2" width="1.7" height="14.5" fill="#B4B4BC"/><polygon points="5.5,4 13,6.5 13,18.5 6,15" fill="url(#rbl)"/><polygon points="13,6.5 17.5,3.5 17.5,14 13,18.5" fill="#E0A838"/><polygon points="5.5,4 11,1.5 17.5,3.5 13,6.5" fill="#F8E6BC"/><polygon points="4,3 12.5,7.5 5,11" fill="#F04A32"/><rect x="10.5" y="14" width="2" height="2" fill="#B01010"/></svg>
<div style="position:absolute;left:46px;top:297px;width:15px;height:14px;border:1px solid #C8C8C8;background:#fff"></div>
<div style="position:absolute;left:48px;top:300px;line-height:10px;font-size:10px;font-family:'Liberation Sans',sans-serif;color:#000;font-weight:normal;white-space:pre;letter-spacing:-0.2px;">11</div>
<div style="position:absolute;left:66px;top:302px;line-height:12px;font-size:12px;font-family:'Liberation Sans',sans-serif;color:#000;font-weight:normal;white-space:pre;letter-spacing:0.36px;">Челябинск-Балашиха</div>
<div style="position:absolute;left:745px;top:302px;line-height:12px;font-size:12px;font-family:'Liberation Sans',sans-serif;color:#000;font-weight:normal;white-space:pre;letter-spacing:0.5px;">45400079831698</div>
<svg style="position:absolute;left:44px;top:317px" width="22" height="21" viewBox="0 0 22 21"><defs><linearGradient id="rbl" x1="0" y1="0" x2="1" y2="1"><stop offset="0" stop-color="#FCE49A"/><stop offset="0.6" stop-color="#F0C050"/><stop offset="1" stop-color="#D89A28"/></linearGradient></defs><polygon points="3,3.5 12.5,5.5 12.5,18.7 3.5,14.5" fill="url(#rbl)"/><polygon points="3,3.5 9,1.5 17.5,3.5 12.5,5.5" fill="#F6E2B0"/><polygon points="12.5,5.5 17.5,3.5 17.5,16 12.5,18.7" fill="#DCA040"/><rect x="13" y="6" width="5" height="4.5" fill="#fff"/><rect x="13" y="14" width="5" height="4.5" fill="#fff"/><rect x="8.5" y="15" width="2" height="2" fill="#C01010"/><polyline points="12.8,5.8 15.5,9.8 20.5,1.5" stroke="#1A5CDC" stroke-width="2" fill="none"/><polyline points="12.8,13.8 15.5,17.8 20.5,10" stroke="#1A5CDC" stroke-width="2" fill="none"/></svg>
<div style="position:absolute;left:70px;top:323px;line-height:12px;font-size:12px;font-family:'Liberation Sans',sans-serif;color:#000;font-weight:normal;white-space:pre;letter-spacing:0.36px;">Приём, 185, Единичный, 454000 Челябинск, 143910 Балашиха, Московская обл., Российская Федерация</div>
<div style="position:absolute;left:745px;top:323px;line-height:12px;font-size:12px;font-family:'Liberation Sans',sans-serif;color:#000;font-weight:normal;white-space:pre;letter-spacing:0.5px;">29.06.2013 9:27:00</div>
<div style="position:absolute;left:0px;top:339px;width:993px;height:20px;background:#FFED8E"></div>
<svg style="position:absolute;left:44px;top:338px" width="22" height="21" viewBox="0 0 22 21"><defs><linearGradient id="rbl" x1="0" y1="0" x2="1" y2="1"><stop offset="0" stop-color="#FCE49A"/><stop offset="0.6" stop-color="#F0C050"/><stop offset="1" stop-color="#D89A28"/></linearGradient></defs><polygon points="3,3.5 12.5,5.5 12.5,18.7 3.5,14.5" fill="url(#rbl)"/><polygon points="3,3.5 9,1.5 17.5,3.5 12.5,5.5" fill="#F6E2B0"/><polygon points="12.5,5.5 17.5,3.5 17.5,16 12.5,18.7" fill="#DCA040"/><rect x="13" y="6" width="5" height="4.5" fill="#fff"/><rect x="13" y="14" width="5" height="4.5" fill="#fff"/><rect x="8.5" y="15" width="2" height="2" fill="#C01010"/><polyline points="12.8,5.8 15.5,9.8 20.5,1.5" stroke="#1A5CDC" stroke-width="2" fill="none"/><polyline points="12.8,13.8 15.5,17.8 20.5,10" stroke="#1A5CDC" stroke-width="2" fill="none"/></svg>
<div style="position:absolute;left:70px;top:344px;line-height:12px;font-size:12px;font-family:'Liberation Sans',sans-serif;color:#000;font-weight:normal;white-space:pre;letter-spacing:0.36px;">Обработка, Покинуло сортировочный центр, 454962 Челябинск МСЦ УОПо</div>
<div style="position:absolute;left:745px;top:344px;line-height:12px;font-size:12px;font-family:'Liberation Sans',sans-serif;color:#000;font-weight:normal;white-space:pre;letter-spacing:0.5px;">30.06.2013</div>
<div style="position:absolute;left:17px;top:365px;width:9px;height:9px;border:1px solid #7B9EBD;border-radius:1px;background:linear-gradient(135deg,#fff,#D6D2C4)"></div>
<div style="position:absolute;left:19px;top:369px;width:5px;height:1px;background:#000"></div>
<svg style="position:absolute;left:28px;top:359px" width="20" height="20" viewBox="0 0 20 20"><rect x="2" y="2" width="1.7" height="14.5" fill="#B4B4BC"/><polygon points="5.5,4 13,6.5 13,18.5 6,15" fill="url(#rbl)"/><polygon points="13,6.5 17.5,3.5 17.5,14 13,18.5" fill="#E0A838"/><polygon points="5.5,4 11,1.5 17.5,3.5 13,6.5" fill="#F8E6BC"/><polygon points="4,3 12.5,7.5 5,11" fill="#F04A32"/><rect x="10.5" y="14" width="2" height="2" fill="#B01010"/></svg>
<div style="position:absolute;left:46px;top:360px;width:15px;height:14px;border:1px solid #C8C8C8;background:#fff"></div>
<div style="position:absolute;left:48px;top:363px;line-height:10px;font-size:10px;font-family:'Liberation Sans',sans-serif;color:#000;font-weight:normal;white-space:pre;letter-spacing:-0.2px;">11</div>
<div style="position:absolute;left:66px;top:365px;line-height:12px;font-size:12px;font-family:'Liberation Sans',sans-serif;color:#000;font-weight:normal;white-space:pre;letter-spacing:0.36px;">Челябинск-СПб</div>
<div style="position:absolute;left:745px;top:365px;line-height:12px;font-size:12px;font-family:'Liberation Sans',sans-serif;color:#000;font-weight:normal;white-space:pre;letter-spacing:0.5px;">45400079831704</div>
<svg style="position:absolute;left:44px;top:380px" width="22" height="21" viewBox="0 0 22 21"><defs><linearGradient id="rbl" x1="0" y1="0" x2="1" y2="1"><stop offset="0" stop-color="#FCE49A"/><stop offset="0.6" stop-color="#F0C050"/><stop offset="1" stop-color="#D89A28"/></linearGradient></defs><polygon points="3,3.5 12.5,5.5 12.5,18.7 3.5,14.5" fill="url(#rbl)"/><polygon points="3,3.5 9,1.5 17.5,3.5 12.5,5.5" fill="#F6E2B0"/><polygon points="12.5,5.5 17.5,3.5 17.5,16 12.5,18.7" fill="#DCA040"/><rect x="13" y="6" width="5" height="4.5" fill="#fff"/><rect x="13" y="14" width="5" height="4.5" fill="#fff"/><rect x="8.5" y="15" width="2" height="2" fill="#C01010"/><polyline points="12.8,5.8 15.5,9.8 20.5,1.5" stroke="#1A5CDC" stroke-width="2" fill="none"/><polyline points="12.8,13.8 15.5,17.8 20.5,10" stroke="#1A5CDC" stroke-width="2" fill="none"/></svg>
<div style="position:absolute;left:70px;top:386px;line-height:12px;font-size:12px;font-family:'Liberation Sans',sans-serif;color:#000;font-weight:normal;white-space:pre;letter-spacing:0.36px;">Приём, 625, Единичный, 454000 Челябинск, 193231 Санкт-Петербург, Российская Федерация</div>
<div style="position:absolute;left:745px;top:386px;line-height:12px;font-size:12px;font-family:'Liberation Sans',sans-serif;color:#000;font-weight:normal;white-space:pre;letter-spacing:0.5px;">29.06.2013 9:26:00</div>
<div style="position:absolute;left:0px;top:402px;width:993px;height:20px;background:#FFFDCA"></div>
<svg style="position:absolute;left:44px;top:401px" width="22" height="21" viewBox="0 0 22 21"><defs><linearGradient id="rbl" x1="0" y1="0" x2="1" y2="1"><stop offset="0" stop-color="#FCE49A"/><stop offset="0.6" stop-color="#F0C050"/><stop offset="1" stop-color="#D89A28"/></linearGradient></defs><polygon points="3,3.5 12.5,5.5 12.5,18.7 3.5,14.5" fill="url(#rbl)"/><polygon points="3,3.5 9,1.5 17.5,3.5 12.5,5.5" fill="#F6E2B0"/><polygon points="12.5,5.5 17.5,3.5 17.5,16 12.5,18.7" fill="#DCA040"/><rect x="13" y="6" width="5" height="4.5" fill="#fff"/><rect x="13" y="14" width="5" height="4.5" fill="#fff"/><rect x="8.5" y="15" width="2" height="2" fill="#C01010"/><polyline points="12.8,5.8 15.5,9.8 20.5,1.5" stroke="#1A5CDC" stroke-width="2" fill="none"/><polyline points="12.8,13.8 15.5,17.8 20.5,10" stroke="#1A5CDC" stroke-width="2" fill="none"/></svg>
<div style="position:absolute;left:70px;top:407px;line-height:12px;font-size:12px;font-family:'Liberation Sans',sans-serif;color:#000;font-weight:normal;white-space:pre;letter-spacing:0.36px;">Обработка, Покинуло сортировочный центр, 454962 Челябинск МСЦ УОПо</div>
<div style="position:absolute;left:745px;top:407px;line-height:12px;font-size:12px;font-family:'Liberation Sans',sans-serif;color:#000;font-weight:normal;white-space:pre;letter-spacing:0.5px;">30.06.2013</div>
<svg style="position:absolute;left:44px;top:422px" width="22" height="21" viewBox="0 0 22 21"><defs><linearGradient id="rbl" x1="0" y1="0" x2="1" y2="1"><stop offset="0" stop-color="#FCE49A"/><stop offset="0.6" stop-color="#F0C050"/><stop offset="1" stop-color="#D89A28"/></linearGradient></defs><polygon points="3,3.5 12.5,5.5 12.5,18.7 3.5,14.5" fill="url(#rbl)"/><polygon points="3,3.5 9,1.5 17.5,3.5 12.5,5.5" fill="#F6E2B0"/><polygon points="12.5,5.5 17.5,3.5 17.5,16 12.5,18.7" fill="#DCA040"/><rect x="13" y="6" width="5" height="4.5" fill="#fff"/><rect x="13" y="14" width="5" height="4.5" fill="#fff"/><rect x="8.5" y="15" width="2" height="2" fill="#C01010"/><polyline points="12.8,5.8 15.5,9.8 20.5,1.5" stroke="#1A5CDC" stroke-width="2" fill="none"/><polyline points="12.8,13.8 15.5,17.8 20.5,10" stroke="#1A5CDC" stroke-width="2" fill="none"/></svg>
<div style="position:absolute;left:70px;top:428px;line-height:12px;font-size:12px;font-family:'Liberation Sans',sans-serif;color:#000;font-weight:normal;white-space:pre;letter-spacing:0.36px;">Обработка, Сортировка, 200983 Санкт-Петербург Асц цех Посылок</div>
<div style="position:absolute;left:745px;top:428px;line-height:12px;font-size:12px;font-family:'Liberation Sans',sans-serif;color:#000;font-weight:normal;white-space:pre;letter-spacing:0.5px;">07.07.2013 23:25:00</div>
<div style="position:absolute;left:0px;top:444px;width:993px;height:20px;background:#FFFDCA"></div>
<svg style="position:absolute;left:44px;top:443px" width="22" height="21" viewBox="0 0 22 21"><defs><linearGradient id="rbl" x1="0" y1="0" x2="1" y2="1"><stop offset="0" stop-color="#FCE49A"/><stop offset="0.6" stop-color="#F0C050"/><stop offset="1" stop-color="#D89A28"/></linearGradient></defs><polygon points="3,3.5 12.5,5.5 12.5,18.7 3.5,14.5" fill="url(#rbl)"/><polygon points="3,3.5 9,1.5 17.5,3.5 12.5,5.5" fill="#F6E2B0"/><polygon points="12.5,5.5 17.5,3.5 17.5,16 12.5,18.7" fill="#DCA040"/><rect x="13" y="6" width="5" height="4.5" fill="#fff"/><rect x="13" y="14" width="5" height="4.5" fill="#fff"/><rect x="8.5" y="15" width="2" height="2" fill="#C01010"/><polyline points="12.8,5.8 15.5,9.8 20.5,1.5" stroke="#1A5CDC" stroke-width="2" fill="none"/><polyline points="12.8,13.8 15.5,17.8 20.5,10" stroke="#1A5CDC" stroke-width="2" fill="none"/></svg>
<div style="position:absolute;left:70px;top:449px;line-height:12px;font-size:12px;font-family:'Liberation Sans',sans-serif;color:#000;font-weight:normal;white-space:pre;letter-spacing:0.36px;">Обработка, Покинуло сортировочный центр, 200980 Санкт-Петербург Асц цех Логистики</div>
<div style="position:absolute;left:745px;top:449px;line-height:12px;font-size:12px;font-family:'Liberation Sans',sans-serif;color:#000;font-weight:normal;white-space:pre;letter-spacing:0.5px;">08.07.2013 3:52:00</div>
<svg style="position:absolute;left:44px;top:464px" width="22" height="21" viewBox="0 0 22 21"><defs><linearGradient id="rbl" x1="0" y1="0" x2="1" y2="1"><stop offset="0" stop-color="#FCE49A"/><stop offset="0.6" stop-color="#F0C050"/><stop offset="1" stop-color="#D89A28"/></linearGradient></defs><polygon points="3,3.5 12.5,5.5 12.5,18.7 3.5,14.5" fill="url(#rbl)"/><polygon points="3,3.5 9,1.5 17.5,3.5 12.5,5.5" fill="#F6E2B0"/><polygon points="12.5,5.5 17.5,3.5 17.5,16 12.5,18.7" fill="#DCA040"/><rect x="13" y="6" width="5" height="4.5" fill="#fff"/><rect x="13" y="14" width="5" height="4.5" fill="#fff"/><rect x="8.5" y="15" width="2" height="2" fill="#C01010"/><polyline points="12.8,5.8 15.5,9.8 20.5,1.5" stroke="#1A5CDC" stroke-width="2" fill="none"/><polyline points="12.8,13.8 15.5,17.8 20.5,10" stroke="#1A5CDC" stroke-width="2" fill="none"/></svg>
<div style="position:absolute;left:70px;top:470px;line-height:12px;font-size:12px;font-family:'Liberation Sans',sans-serif;color:#000;font-weight:normal;white-space:pre;letter-spacing:0.36px;">Обработка, Покинуло сортировочный центр, 190916 Санкт-Петербург-Фрунзенский Уооп</div>
<div style="position:absolute;left:745px;top:470px;line-height:12px;font-size:12px;font-family:'Liberation Sans',sans-serif;color:#000;font-weight:normal;white-space:pre;letter-spacing:0.5px;">09.07.2013</div>
<div style="position:absolute;left:0px;top:486px;width:993px;height:20px;background:#FFED8E"></div>
<svg style="position:absolute;left:44px;top:485px" width="22" height="21" viewBox="0 0 22 21"><defs><linearGradient id="rbl" x1="0" y1="0" x2="1" y2="1"><stop offset="0" stop-color="#FCE49A"/><stop offset="0.6" stop-color="#F0C050"/><stop offset="1" stop-color="#D89A28"/></linearGradient></defs><polygon points="3,3.5 12.5,5.5 12.5,18.7 3.5,14.5" fill="url(#rbl)"/><polygon points="3,3.5 9,1.5 17.5,3.5 12.5,5.5" fill="#F6E2B0"/><polygon points="12.5,5.5 17.5,3.5 17.5,16 12.5,18.7" fill="#DCA040"/><rect x="13" y="6" width="5" height="4.5" fill="#fff"/><rect x="13" y="14" width="5" height="4.5" fill="#fff"/><rect x="8.5" y="15" width="2" height="2" fill="#C01010"/><polyline points="12.8,5.8 15.5,9.8 20.5,1.5" stroke="#1A5CDC" stroke-width="2" fill="none"/><polyline points="12.8,13.8 15.5,17.8 20.5,10" stroke="#1A5CDC" stroke-width="2" fill="none"/></svg>
<div style="position:absolute;left:70px;top:491px;line-height:12px;font-size:12px;font-family:'Liberation Sans',sans-serif;color:#000;font-weight:normal;white-space:pre;letter-spacing:0.36px;">Обработка, 620, Прибыло в место вручения, 193313 Санкт-Петербург 313</div>
<div style="position:absolute;left:745px;top:491px;line-height:12px;font-size:12px;font-family:'Liberation Sans',sans-serif;color:#000;font-weight:normal;white-space:pre;letter-spacing:0.5px;">09.07.2013 9:29:00</div>
<div style="position:absolute;left:0px;top:2px;width:993px;height:1px;background:repeating-linear-gradient(90deg,#DCDCD8 0,#DCDCD8 1px,transparent 1px,transparent 2px)"></div>
<div style="position:absolute;left:0px;top:23px;width:993px;height:1px;background:repeating-linear-gradient(90deg,#DCDCD8 0,#DCDCD8 1px,transparent 1px,transparent 2px)"></div>
<div style="position:absolute;left:0px;top:44px;width:993px;height:1px;background:repeating-linear-gradient(90deg,#DCDCD8 0,#DCDCD8 1px,transparent 1px,transparent 2px)"></div>
<div style="position:absolute;left:0px;top:65px;width:993px;height:1px;background:repeating-linear-gradient(90deg,#DCDCD8 0,#DCDCD8 1px,transparent 1px,transparent 2px)"></div>
<div style="position:absolute;left:0px;top:86px;width:993px;height:1px;background:repeating-linear-gradient(90deg,#DCDCD8 0,#DCDCD8 1px,transparent 1px,transparent 2px)"></div>
<div style="position:absolute;left:0px;top:107px;width:993px;height:1px;background:repeating-linear-gradient(90deg,#DCDCD8 0,#DCDCD8 1px,transparent 1px,transparent 2px)"></div>
<div style="position:absolute;left:0px;top:128px;width:993px;height:1px;background:repeating-linear-gradient(90deg,#DCDCD8 0,#DCDCD8 1px,transparent 1px,transparent 2px)"></div>
<div style="position:absolute;left:0px;top:149px;width:993px;height:1px;background:repeating-linear-gradient(90deg,#DCDCD8 0,#DCDCD8 1px,transparent 1px,transparent 2px)"></div>
<div style="position:absolute;left:0px;top:170px;width:993px;height:1px;background:repeating-linear-gradient(90deg,#DCDCD8 0,#DCDCD8 1px,transparent 1px,transparent 2px)"></div>
<div style="position:absolute;left:0px;top:191px;width:993px;height:1px;background:repeating-linear-gradient(90deg,#DCDCD8 0,#DCDCD8 1px,transparent 1px,transparent 2px)"></div>
<div style="position:absolute;left:0px;top:212px;width:993px;height:1px;background:repeating-linear-gradient(90deg,#DCDCD8 0,#DCDCD8 1px,transparent 1px,transparent 2px)"></div>
<div style="position:absolute;left:0px;top:233px;width:993px;height:1px;background:repeating-linear-gradient(90deg,#DCDCD8 0,#DCDCD8 1px,transparent 1px,transparent 2px)"></div>
<div style="position:absolute;left:0px;top:254px;width:993px;height:1px;background:repeating-linear-gradient(90deg,#DCDCD8 0,#DCDCD8 1px,transparent 1px,transparent 2px)"></div>
<div style="position:absolute;left:0px;top:275px;width:993px;height:1px;background:repeating-linear-gradient(90deg,#DCDCD8 0,#DCDCD8 1px,transparent 1px,transparent 2px)"></div>
<div style="position:absolute;left:0px;top:296px;width:993px;height:1px;background:repeating-linear-gradient(90deg,#DCDCD8 0,#DCDCD8 1px,transparent 1px,transparent 2px)"></div>
<div style="position:absolute;left:0px;top:317px;width:993px;height:1px;background:repeating-linear-gradient(90deg,#DCDCD8 0,#DCDCD8 1px,transparent 1px,transparent 2px)"></div>
<div style="position:absolute;left:0px;top:338px;width:993px;height:1px;background:repeating-linear-gradient(90deg,#DCDCD8 0,#DCDCD8 1px,transparent 1px,transparent 2px)"></div>
<div style="position:absolute;left:0px;top:359px;width:993px;height:1px;background:repeating-linear-gradient(90deg,#DCDCD8 0,#DCDCD8 1px,transparent 1px,transparent 2px)"></div>
<div style="position:absolute;left:0px;top:380px;width:993px;height:1px;background:repeating-linear-gradient(90deg,#DCDCD8 0,#DCDCD8 1px,transparent 1px,transparent 2px)"></div>
<div style="position:absolute;left:0px;top:401px;width:993px;height:1px;background:repeating-linear-gradient(90deg,#DCDCD8 0,#DCDCD8 1px,transparent 1px,transparent 2px)"></div>
<div style="position:absolute;left:0px;top:422px;width:993px;height:1px;background:repeating-linear-gradient(90deg,#DCDCD8 0,#DCDCD8 1px,transparent 1px,transparent 2px)"></div>
<div style="position:absolute;left:0px;top:443px;width:993px;height:1px;background:repeating-linear-gradient(90deg,#DCDCD8 0,#DCDCD8 1px,transparent 1px,transparent 2px)"></div>
<div style="position:absolute;left:0px;top:464px;width:993px;height:1px;background:repeating-linear-gradient(90deg,#DCDCD8 0,#DCDCD8 1px,transparent 1px,transparent 2px)"></div>
<div style="position:absolute;left:0px;top:485px;width:993px;height:1px;background:repeating-linear-gradient(90deg,#DCDCD8 0,#DCDCD8 1px,transparent 1px,transparent 2px)"></div>
<div style="position:absolute;left:0px;top:506px;width:993px;height:1px;background:repeating-linear-gradient(90deg,#DCDCD8 0,#DCDCD8 1px,transparent 1px,transparent 2px)"></div>
<div style="position:absolute;left:0px;top:486px;width:1100px;height:21px;border:1px dotted #14146E"></div>
<div style="position:absolute;left:3px;top:512px;width:9px;height:9px;border:1px solid #7B9EBD;background:#fff"></div>
<svg style="position:absolute;left:19px;top:508px" width="17" height="12" viewBox="0 0 17 12"><path d="M1 3h6l2 2h7v10h-15z" fill="#F2DC8A" stroke="#D8B860"/></svg>
<div style="position:absolute;left:41px;top:512px;line-height:12px;font-size:12px;font-family:'Liberation Sans',sans-serif;color:#000;font-weight:normal;white-space:pre;letter-spacing:0.36px;">6. Посылка</div>
</div>
<div style="position:absolute;left:999px;top:149px;width:17px;height:516px;background:linear-gradient(90deg,#F3F1EC 0,#FEFEFB 100%)"></div>
<div style="position:absolute;left:1000px;top:149px;width:15px;height:16px;border:1px solid #fff;border-radius:3px;background:linear-gradient(135deg,#CCDCFE 0,#C0D2FC 50%,#B0C6F8 100%);box-shadow:inset -1px -1px 0 #A8BCE6, 1px 1px 0 rgba(160,180,220,0.5)"></div>
<svg style="position:absolute;left:1003px;top:153px" width="9" height="6" viewBox="0 0 9 6"><path d="M1 5 L4.5 1.5 L8 5" stroke="#4D6185" stroke-width="2" fill="none"/></svg>
<div style="position:absolute;left:1000px;top:300px;width:15px;height:168px;border:1px solid #fff;border-radius:3px;background:linear-gradient(135deg,#CCDCFE 0,#C0D2FC 50%,#B0C6F8 100%);box-shadow:inset -1px -1px 0 #A8BCE6, 1px 1px 0 rgba(160,180,220,0.5)"></div>
<div style="position:absolute;left:1004px;top:380px;width:7px;height:1px;background:#EEF4FE"></div>
<div style="position:absolute;left:1005px;top:381px;width:7px;height:1px;background:#9CB4E4"></div>
<div style="position:absolute;left:1004px;top:382px;width:7px;height:1px;background:#EEF4FE"></div>
<div style="position:absolute;left:1005px;top:383px;width:7px;height:1px;background:#9CB4E4"></div>
<div style="position:absolute;left:1004px;top:384px;width:7px;height:1px;background:#EEF4FE"></div>
<div style="position:absolute;left:1005px;top:385px;width:7px;height:1px;background:#9CB4E4"></div>
<div style="position:absolute;left:1004px;top:386px;width:7px;height:1px;background:#EEF4FE"></div>
<div style="position:absolute;left:1005px;top:387px;width:7px;height:1px;background:#9CB4E4"></div>
<div style="position:absolute;left:1000px;top:648px;width:15px;height:17px;border:1px solid #fff;border-radius:3px;background:linear-gradient(135deg,#CCDCFE 0,#C0D2FC 50%,#B0C6F8 100%);box-shadow:inset -1px -1px 0 #A8BCE6, 1px 1px 0 rgba(160,180,220,0.5)"></div>
<svg style="position:absolute;left:1003px;top:653px" width="9" height="6" viewBox="0 0 9 6"><path d="M1 1 L4.5 4.5 L8 1" stroke="#4D6185" stroke-width="2" fill="none"/></svg>
<div style="position:absolute;left:6px;top:665px;width:993px;height:17px;background:linear-gradient(180deg,#F3F1EC 0,#FEFEFB 100%)"></div>
<div style="position:absolute;left:7px;top:666px;width:15px;height:16px;border:1px solid #fff;border-radius:3px;background:linear-gradient(135deg,#CCDCFE 0,#C0D2FC 50%,#B0C6F8 100%);box-shadow:inset -1px -1px 0 #A8BCE6, 1px 1px 0 rgba(160,180,220,0.5)"></div>
<svg style="position:absolute;left:10px;top:669px" width="6" height="9" viewBox="0 0 6 9"><path d="M5 1 L1.5 4.5 L5 8" stroke="#4D6185" stroke-width="2" fill="none"/></svg>
<div style="position:absolute;left:24px;top:666px;width:671px;height:16px;border:1px solid #fff;border-radius:3px;background:linear-gradient(135deg,#CCDCFE 0,#C0D2FC 50%,#B0C6F8 100%);box-shadow:inset -1px -1px 0 #A8BCE6, 1px 1px 0 rgba(160,180,220,0.5)"></div>
<div style="position:absolute;left:982px;top:666px;width:16px;height:16px;border:1px solid #fff;border-radius:3px;background:linear-gradient(135deg,#CCDCFE 0,#C0D2FC 50%,#B0C6F8 100%);box-shadow:inset -1px -1px 0 #A8BCE6, 1px 1px 0 rgba(160,180,220,0.5)"></div>
<div style="position:absolute;left:355px;top:670px;width:1px;height:7px;background:#EEF4FE"></div>
<div style="position:absolute;left:356px;top:671px;width:1px;height:7px;background:#9CB4E4"></div>
<div style="position:absolute;left:357px;top:670px;width:1px;height:7px;background:#EEF4FE"></div>
<div style="position:absolute;left:358px;top:671px;width:1px;height:7px;background:#9CB4E4"></div>
<div style="position:absolute;left:359px;top:670px;width:1px;height:7px;background:#EEF4FE"></div>
<div style="position:absolute;left:360px;top:671px;width:1px;height:7px;background:#9CB4E4"></div>
<div style="position:absolute;left:361px;top:670px;width:1px;height:7px;background:#EEF4FE"></div>
<div style="position:absolute;left:362px;top:671px;width:1px;height:7px;background:#9CB4E4"></div>
<svg style="position:absolute;left:987px;top:669px" width="6" height="9" viewBox="0 0 6 9"><path d="M1 1 L4.5 4.5 L1 8" stroke="#4D6185" stroke-width="2" fill="none"/></svg>
<div style="position:absolute;left:999px;top:665px;width:17px;height:17px;background:#ECE9D8"></div>
<div style="position:absolute;left:4px;top:685px;width:1014px;height:18px;background:#ECE9D8"></div>
<div style="position:absolute;left:5px;top:687px;width:1px;height:15px;background:#3D6AD0"></div>
<div style="position:absolute;left:72px;top:690px;line-height:11px;font-size:11px;font-family:'Liberation Sans',sans-serif;color:#F8F8F8;font-weight:normal;white-space:pre;">1%</div>
<div style="position:absolute;left:153px;top:688px;width:1px;height:13px;background:#fff"></div>
<div style="position:absolute;left:157px;top:690px;line-height:11px;font-size:11px;font-family:'Liberation Sans',sans-serif;color:#000;font-weight:normal;white-space:pre;letter-spacing:0.1px;">Посл.проверка (15/0): 10.07.2013 11:48:35 Следующая через  00:58:59</div>
<div style="position:absolute;left:1013px;top:690px;width:2px;height:2px;background:#C4C0AE"></div>
<div style="position:absolute;left:1009px;top:694px;width:2px;height:2px;background:#C4C0AE"></div>
<div style="position:absolute;left:1013px;top:694px;width:2px;height:2px;background:#C4C0AE"></div>
<div style="position:absolute;left:1005px;top:698px;width:2px;height:2px;background:#C4C0AE"></div>
<div style="position:absolute;left:1009px;top:698px;width:2px;height:2px;background:#C4C0AE"></div>
<div style="position:absolute;left:1013px;top:698px;width:2px;height:2px;background:#C4C0AE"></div>
</body></html>
